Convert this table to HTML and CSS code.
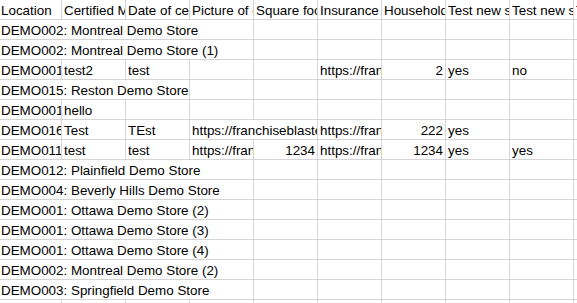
FILE: index.html
```html
<!DOCTYPE html>
<html>
<head>
<meta charset="utf-8">
<link rel="stylesheet" href="styles.css">
</head>
<body>
<div class="sheet">
  <div class="row">
    <div class="c a">Location</div>
    <div class="c">Certified Manager</div>
    <div class="c">Date of certification</div>
    <div class="c">Picture of certificate</div>
    <div class="c">Square footage</div>
    <div class="c">Insurance</div>
    <div class="c">Household items</div>
    <div class="c">Test new section</div>
    <div class="c">Test new section 2</div>
    <div class="c">Test</div>
  </div>
  <div class="row">
    <div class="c a s4">DEMO002: Montreal Demo Store</div>
    <div class="c"></div><div class="c"></div><div class="c"></div><div class="c"></div><div class="c"></div><div class="c"></div>
  </div>
  <div class="row">
    <div class="c a s4">DEMO002: Montreal Demo Store (1)</div>
    <div class="c"></div><div class="c"></div><div class="c"></div><div class="c"></div><div class="c"></div><div class="c"></div>
  </div>
  <div class="row">
    <div class="c a">DEMO001: Ottawa Demo Store</div>
    <div class="c">test2</div>
    <div class="c">test</div>
    <div class="c"></div>
    <div class="c"></div>
    <div class="c">https://franchiseblaster.com</div>
    <div class="c n">2</div>
    <div class="c">yes</div>
    <div class="c">no</div>
    <div class="c"></div>
  </div>
  <div class="row">
    <div class="c a s3">DEMO015: Reston Demo Store</div>
    <div class="c"></div><div class="c"></div><div class="c"></div><div class="c"></div><div class="c"></div><div class="c"></div><div class="c"></div>
  </div>
  <div class="row">
    <div class="c a">DEMO001: Ottawa Demo Store</div>
    <div class="c">hello</div>
    <div class="c"></div><div class="c"></div><div class="c"></div><div class="c"></div><div class="c"></div><div class="c"></div><div class="c"></div><div class="c"></div>
  </div>
  <div class="row">
    <div class="c a">DEMO016: Demo Store</div>
    <div class="c">Test</div>
    <div class="c">TEst</div>
    <div class="c s2">https://franchiseblaster.com</div>
    <div class="c">https://franchiseblaster.com</div>
    <div class="c n">222</div>
    <div class="c">yes</div>
    <div class="c"></div>
    <div class="c"></div>
  </div>
  <div class="row">
    <div class="c a">DEMO011: Demo Store</div>
    <div class="c">test</div>
    <div class="c">test</div>
    <div class="c">https://franchiseblaster.com</div>
    <div class="c n">1234</div>
    <div class="c">https://franchiseblaster.com</div>
    <div class="c n">1234</div>
    <div class="c">yes</div>
    <div class="c">yes</div>
    <div class="c"></div>
  </div>
  <div class="row">
    <div class="c a s4">DEMO012: Plainfield Demo Store</div>
    <div class="c"></div><div class="c"></div><div class="c"></div><div class="c"></div><div class="c"></div><div class="c"></div>
  </div>
  <div class="row">
    <div class="c a s4">DEMO004: Beverly Hills Demo Store</div>
    <div class="c"></div><div class="c"></div><div class="c"></div><div class="c"></div><div class="c"></div><div class="c"></div>
  </div>
  <div class="row">
    <div class="c a s4">DEMO001: Ottawa Demo Store (2)</div>
    <div class="c"></div><div class="c"></div><div class="c"></div><div class="c"></div><div class="c"></div><div class="c"></div>
  </div>
  <div class="row">
    <div class="c a s4">DEMO001: Ottawa Demo Store (3)</div>
    <div class="c"></div><div class="c"></div><div class="c"></div><div class="c"></div><div class="c"></div><div class="c"></div>
  </div>
  <div class="row">
    <div class="c a s4">DEMO001: Ottawa Demo Store (4)</div>
    <div class="c"></div><div class="c"></div><div class="c"></div><div class="c"></div><div class="c"></div><div class="c"></div>
  </div>
  <div class="row">
    <div class="c a s4">DEMO002: Montreal Demo Store (2)</div>
    <div class="c"></div><div class="c"></div><div class="c"></div><div class="c"></div><div class="c"></div><div class="c"></div>
  </div>
  <div class="row">
    <div class="c a s4">DEMO003: Springfield Demo Store</div>
    <div class="c"></div><div class="c"></div><div class="c"></div><div class="c"></div><div class="c"></div><div class="c"></div>
  </div>
  <div class="row">
    <div class="c a"></div>
    <div class="c"></div><div class="c"></div><div class="c"></div><div class="c"></div><div class="c"></div><div class="c"></div><div class="c"></div><div class="c"></div><div class="c"></div>
  </div>
</div>
</body>
</html>
```

FILE: styles.css
```css
html, body {
  margin: 0;
  padding: 0;
  background: #ffffff;
  overflow: hidden;
}

.sheet {
  width: 640px;
  font-family: "Liberation Sans", Arial, sans-serif;
  font-size: 13.4px;
  color: #000000;
}

.row {
  display: grid;
  grid-template-columns: 62px repeat(9, 64px);
}

.c {
  box-sizing: border-box;
  height: 20px;
  padding: 3px 2px 0 2px;
  line-height: 16px;
  border-right: 1px solid #d4d4d4;
  border-bottom: 1px solid #d4d4d4;
  white-space: nowrap;
  overflow: hidden;
}

.a {
  padding-left: 1px;
}

.n {
  text-align: right;
}

.s2 {
  grid-column: span 2;
}

.s3 {
  grid-column: span 3;
}

.s4 {
  grid-column: span 4;
}
```
